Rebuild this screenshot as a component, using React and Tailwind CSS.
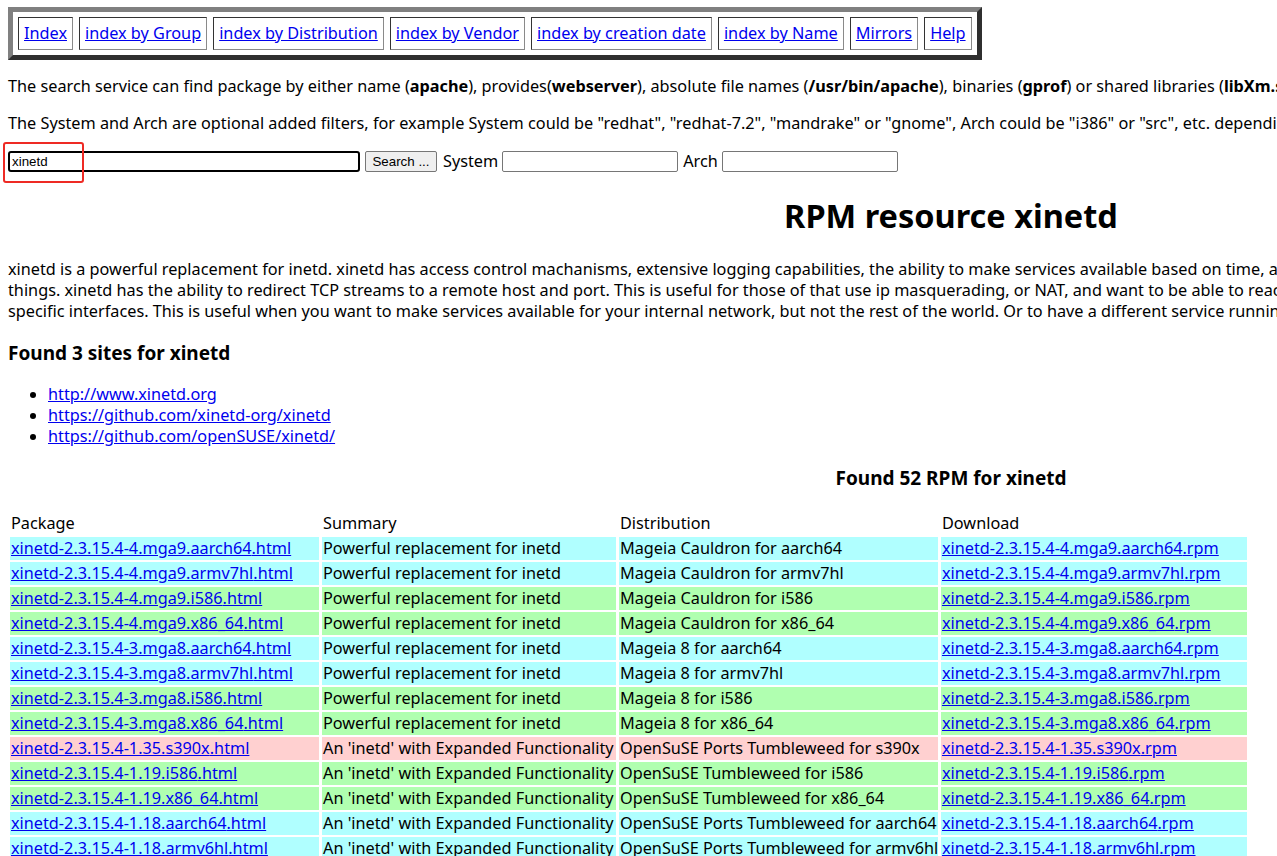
import React from "react";

const navLinks = [
  "Index",
  "index by Group",
  "index by Distribution",
  "index by Vendor",
  "index by creation date",
  "index by Name",
  "Mirrors",
  "Help",
];

const CYAN = "bg-[#b0ffff]";
const GREEN = "bg-[#b0ffb0]";
const PINK = "bg-[#ffd0d0]";

const MGA = "Powerful replacement for inetd";
const SUSE = "An 'inetd' with Expanded Functionality";

const rows = [
  ["xinetd-2.3.15.4-4.mga9.aarch64", MGA, "Mageia Cauldron for aarch64", CYAN],
  ["xinetd-2.3.15.4-4.mga9.armv7hl", MGA, "Mageia Cauldron for armv7hl", CYAN],
  ["xinetd-2.3.15.4-4.mga9.i586", MGA, "Mageia Cauldron for i586", GREEN],
  ["xinetd-2.3.15.4-4.mga9.x86_64", MGA, "Mageia Cauldron for x86_64", GREEN],
  ["xinetd-2.3.15.4-3.mga8.aarch64", MGA, "Mageia 8 for aarch64", CYAN],
  ["xinetd-2.3.15.4-3.mga8.armv7hl", MGA, "Mageia 8 for armv7hl", CYAN],
  ["xinetd-2.3.15.4-3.mga8.i586", MGA, "Mageia 8 for i586", GREEN],
  ["xinetd-2.3.15.4-3.mga8.x86_64", MGA, "Mageia 8 for x86_64", GREEN],
  ["xinetd-2.3.15.4-1.35.s390x", SUSE, "OpenSuSE Ports Tumbleweed for s390x", PINK],
  ["xinetd-2.3.15.4-1.19.i586", SUSE, "OpenSuSE Tumbleweed for i586", GREEN],
  ["xinetd-2.3.15.4-1.19.x86_64", SUSE, "OpenSuSE Tumbleweed for x86_64", GREEN],
  ["xinetd-2.3.15.4-1.18.aarch64", SUSE, "OpenSuSE Ports Tumbleweed for aarch64", CYAN],
  ["xinetd-2.3.15.4-1.18.armv6hl", SUSE, "OpenSuSE Ports Tumbleweed for armv6hl", CYAN],
  ["xinetd-2.3.15.4-1.18.armv7hl", SUSE, "OpenSuSE Ports Tumbleweed for armv7hl", CYAN],
];

const link = "text-[#0000ee] underline";
const cell = "h-[23px] px-[1px] py-[1px] whitespace-nowrap overflow-hidden";

export default function App() {
  return (
    <div className="w-[1277px] h-[856px] overflow-hidden bg-white">
      <div
        className="relative w-[1902px] pl-2 flex flex-col items-start text-black text-[16.25px] leading-[21px]"
        style={{ fontFamily: '"Noto Sans", sans-serif' }}
      >
        {/* top navigation table */}
        <div className="mt-[7px] flex gap-[6px] p-[5px] border-[5px] border-t-[#808080] border-l-[#808080] border-b-[#2f2f2f] border-r-[#2f2f2f]">
          {navLinks.map((l) => (
            <div
              key={l}
              className="px-[5px] py-[5px] border border-t-[#333] border-l-[#333] border-b-[#8a8a8a] border-r-[#8a8a8a]"
            >
              <a href="#" className={link}>
                {l}
              </a>
            </div>
          ))}
        </div>

        <p className="mt-4 whitespace-nowrap">
          The search service can find package by either name (<b>apache</b>), provides(<b>webserver</b>), absolute
          file names (<b>/usr/bin/apache</b>), binaries (<b>gprof</b>) or shared libraries (<b>libXm.so.2</b>) in
          standard path. It does not support multiple arguments yet...
        </p>
        <p className="mt-4 whitespace-nowrap">
          The System and Arch are optional added filters, for example System could be "redhat", "redhat-7.2",
          "mandrake" or "gnome", Arch could be "i386" or "src", etc. depending on your system.
        </p>

        {/* search form */}
        <div className="mt-4 h-[23px] flex items-center">
          <div className="w-[352px] h-[21px] border-2 border-black rounded-[3px] px-[2px] flex items-center text-[13.33px] font-['Liberation_Sans'] leading-none">
            xinetd
          </div>
          <div className="ml-[5px] w-[72px] h-[21px] bg-[#efefef] border border-[#767676] rounded-[2px] flex items-center justify-center text-[13.33px] font-['Liberation_Sans'] leading-none">
            Search ...
          </div>
          <span className="ml-[6px]">System</span>
          <div className="ml-[4px] w-[176px] h-[21px] border border-[#767676] rounded-[2px]" />
          <span className="ml-[5px]">Arch</span>
          <div className="ml-[4px] w-[176px] h-[21px] border border-[#767676] rounded-[2px]" />
        </div>
        <div className="absolute left-[3px] top-[142px] w-[81px] h-[41px] border-2 border-[#ee2a24] rounded-[3px]" />

        <h1 className="mt-[21px] w-[1886px] text-center text-[32.5px] leading-[43px] font-bold">
          RPM resource xinetd
        </h1>

        <p className="mt-[22px] whitespace-nowrap">
          xinetd is a powerful replacement for inetd. xinetd has access control machanisms, extensive logging
          capabilities, the ability to make services available based on time, and can place limits on the number of
          servers that can be started, among other
          <br />
          things. xinetd has the ability to redirect TCP streams to a remote host and port. This is useful for those of
          that use ip masquerading, or NAT, and want to be able to reach your internal hosts. xinetd also has the
          ability to bind specific services to
          <br />
          specific interfaces. This is useful when you want to make services available for your internal network, but
          not the rest of the world. Or to have a different service running on the same port, but different
          interfaces.
        </p>

        <h3 className="mt-[19px] text-[19px] leading-[25px] font-bold">Found 3 sites for xinetd</h3>
        <ul className="mt-[18px] pl-10 list-disc">
          <li>
            <a href="#" className={link}>
              http://www.xinetd.org
            </a>
          </li>
          <li>
            <a href="#" className={link}>
              https://github.com/xinetd-org/xinetd
            </a>
          </li>
          <li>
            <a href="#" className={link}>
              https://github.com/openSUSE/xinetd/
            </a>
          </li>
        </ul>

        <h3 className="mt-[19px] w-[1886px] text-center text-[19px] leading-[25px] font-bold">
          Found 52 RPM for xinetd
        </h3>

        {/* rpm table */}
        <div className="mt-[21px] ml-[2px] grid grid-cols-[309px_294px_319px_306px] gap-x-[3px] gap-y-[2px]">
          <div className={cell}>Package</div>
          <div className={cell}>Summary</div>
          <div className={cell}>Distribution</div>
          <div className={cell}>Download</div>
          {rows.map(([name, summary, dist, bg]) => (
            <React.Fragment key={name}>
              <div className={`${cell} ${bg}`}>
                <a href="#" className={link}>
                  {name}.html
                </a>
              </div>
              <div className={`${cell} ${bg}`}>{summary}</div>
              <div className={`${cell} ${bg}`}>{dist}</div>
              <div className={`${cell} ${bg}`}>
                <a href="#" className={link}>
                  {name}.rpm
                </a>
              </div>
            </React.Fragment>
          ))}
        </div>
      </div>
    </div>
  );
}
